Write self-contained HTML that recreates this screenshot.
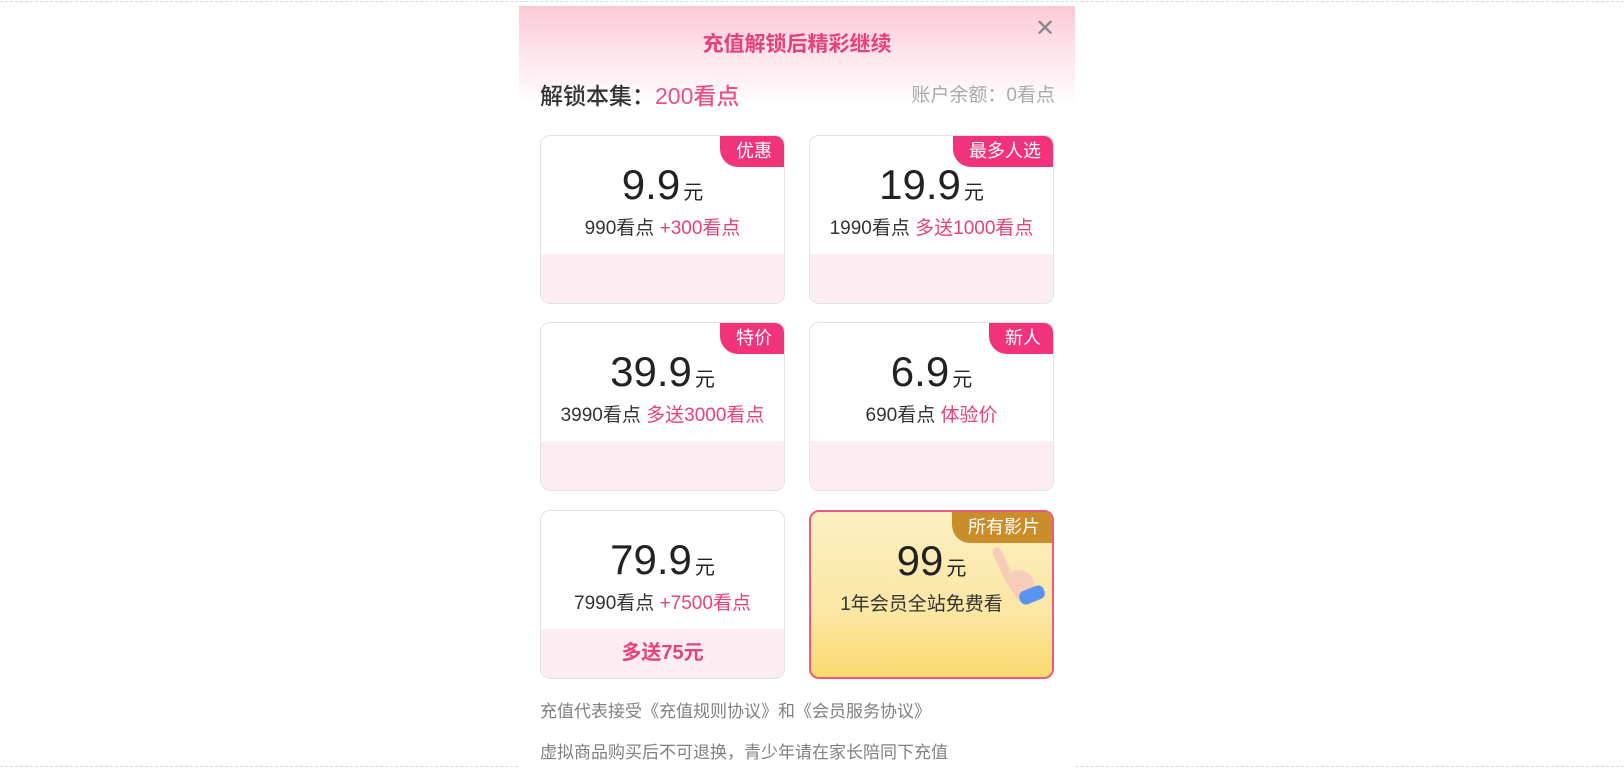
<!DOCTYPE html>
<html><head><meta charset="utf-8"><style>
*{margin:0;padding:0;box-sizing:border-box}
body{width:1624px;height:768px;background:#fff;position:relative;overflow:hidden;font-family:"Liberation Sans","Noto Sans CJK SC",sans-serif}
.dots{position:absolute;left:0;right:0;height:0;border-top:1px dashed #d8d8d8}
.panel{position:absolute;left:519px;top:6px;width:556px;height:762px;background:#fff}
.hdr{position:absolute;left:0;top:0;width:556px;height:100px;background:linear-gradient(180deg,#fcc9d6 0%,#fde3ea 45%,#fff 100%)}
.title{position:absolute;left:0;width:556px;top:22px;text-align:center;font-size:21px;font-weight:bold;color:#e8407a}
.close{position:absolute;left:516px;top:8px;font-size:24px;color:#888}
.unlock{position:absolute;left:21px;top:71px;font-size:23px;color:#333;font-weight:500}
.unlock span{color:#ea4f86}
.bal{position:absolute;right:20px;top:74px;font-size:19px;color:#aaa}
.card{position:absolute;width:245px;height:169px;border:1.5px solid #e2e2e2;border-radius:10px;overflow:hidden;background:#fff}
.card .bot{position:absolute;left:0;right:0;bottom:0;height:49px;background:#fcedf2;text-align:center;line-height:49px;font-size:20px;color:#e8407a;font-weight:bold}
.badge{position:absolute;right:0;top:0;height:31px;padding:0 12px 0 16px;background:#f0337a;color:#fff;font-size:18px;line-height:31px;border-radius:0 8px 0 18px}
.price{position:absolute;left:0;right:0;top:25px;text-align:center;font-size:42px;color:#222}
.price small{font-size:20px;margin-left:3px}
.sub{position:absolute;left:0;right:0;top:77px;text-align:center;font-size:19px;color:#333}
.sub span{color:#e8407a}
.gold{background:linear-gradient(180deg,#fcefc0 0%,#fbe7a5 60%,#fbd96e 100%);border:2.5px solid #ee5a7d}
.gold .badge{background:#c98e2a}
.foot{position:absolute;left:21px;font-size:17px;color:#808080}
</style></head><body>
<div class="dots" style="top:1px"></div>
<div class="dots" style="top:766px"></div>
<div class="panel">
<div class="hdr"></div>
<div class="title">充值解锁后精彩继续</div>
<div class="close">✕</div>
<div class="unlock">解锁本集：<span>200看点</span></div>
<div class="bal">账户余额：0看点</div>

<div class="card" style="left:21px;top:129px"><div class="badge">优惠</div><div class="price">9.9<small>元</small></div><div class="sub">990看点 <span>+300看点</span></div><div class="bot"></div></div>
<div class="card" style="left:290px;top:129px"><div class="badge">最多人选</div><div class="price">19.9<small>元</small></div><div class="sub">1990看点 <span>多送1000看点</span></div><div class="bot"></div></div>
<div class="card" style="left:21px;top:316px"><div class="badge">特价</div><div class="price">39.9<small>元</small></div><div class="sub">3990看点 <span>多送3000看点</span></div><div class="bot"></div></div>
<div class="card" style="left:290px;top:316px"><div class="badge">新人</div><div class="price">6.9<small>元</small></div><div class="sub">690看点 <span>体验价</span></div><div class="bot"></div></div>
<div class="card" style="left:21px;top:504px"><div class="price">79.9<small>元</small></div><div class="sub">7990看点 <span>+7500看点</span></div><div class="bot">多送75元</div></div>
<div class="card gold" style="left:290px;top:504px"><div class="badge">所有影片</div><div class="price">99<small>元</small></div><div class="sub" style="padding-right:20px">1年会员全站免费看</div>
<svg style="position:absolute;left:178px;top:32px" width="60" height="66" viewBox="0 0 60 66"><path d="M6 4 C10 2 13 6 16 14 L22 28 C30 24 40 26 44 36 L48 50 L30 58 C24 50 20 42 14 32 L4 10 C3 7 4 5 6 4Z" fill="#f6cdb8"/><rect x="30" y="44" width="26" height="14" rx="6" transform="rotate(-22 43 51)" fill="#5b93f0"/></svg>
</div>

<div class="foot" style="top:691px">充值代表接受《充值规则协议》和《会员服务协议》</div>
<div class="foot" style="top:732px">虚拟商品购买后不可退换，青少年请在家长陪同下充值</div>
</div>
</body></html>
